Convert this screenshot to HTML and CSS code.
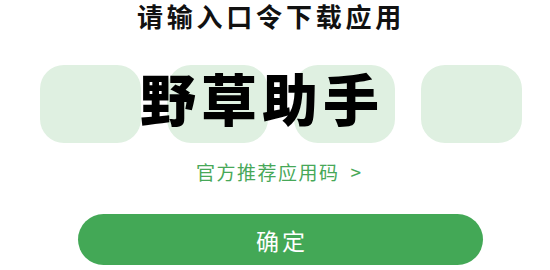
FILE: index.html
```html
<!DOCTYPE html>
<html lang="zh-CN">
<head>
<meta charset="utf-8">
<link rel="stylesheet" href="styles.css">
</head>
<body>
<div class="page">
  <h1 class="title">请输入口令下载应用</h1>
  <div class="code">
    <div class="boxes">
      <div class="box"></div>
      <div class="box"></div>
      <div class="box"></div>
      <div class="box"></div>
    </div>
    <div class="code-text">野草助手</div>
  </div>
  <a class="link">官方推荐应用码<span class="arrow">&gt;</span></a>
  <button class="btn">确定</button>
</div>
</body>
</html>
```
FILE: styles.css
```css
html, body {
  margin: 0;
  padding: 0;
  background: #ffffff;
}
body {
  width: 550px;
  font-family: "Noto Sans CJK SC", "Noto Sans", sans-serif;
}
.page {
  display: flex;
  flex-direction: column;
}
.title {
  margin: 0;
  padding-right: 8px;
  font-size: 26px;
  line-height: 32px;
  font-weight: 700;
  letter-spacing: 3.8px;
  text-align: center;
  color: #111111;
}
.code {
  position: relative;
  margin-top: 33px;
  height: 78px;
}
.boxes {
  display: flex;
  gap: 26px;
  padding-left: 40px;
}
.box {
  width: 101px;
  height: 78px;
  border-radius: 24px;
  background: #dff0e1;
}
.code-text {
  position: absolute;
  left: 0;
  right: 0;
  top: 2px;
  padding-right: 26px;
  text-align: center;
  font-size: 56px;
  line-height: 60px;
  font-weight: 900;
  letter-spacing: 5px;
  color: #000000;
}
.link {
  align-self: flex-start;
  margin: 18px 0 0 196px;
  font-size: 19px;
  line-height: 22px;
  letter-spacing: 1.5px;
  color: #47a858;
}
.arrow {
  margin-left: 11px;
}
.btn {
  align-self: flex-start;
  margin: 31px 0 0 78px;
  width: 405px;
  height: 51px;
  border: none;
  border-radius: 26px;
  background: #43a856;
  color: #ffffff;
  font-family: inherit;
  font-size: 23px;
  letter-spacing: 3px;
  padding: 0 0 0 3px;
}
```
